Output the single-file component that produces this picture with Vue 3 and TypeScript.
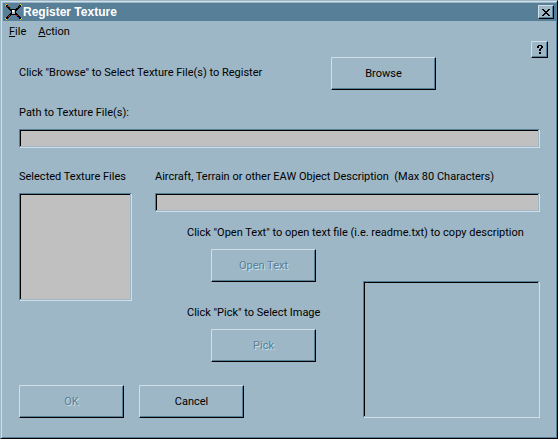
<script setup lang="ts">
import { ref } from 'vue'

interface MenuEntry {
  key: string
  rest: string
}

const menus: MenuEntry[] = [
  { key: 'F', rest: 'ile' },
  { key: 'A', rest: 'ction' },
]

const path = ref('')
const description = ref('')
const files = ref<string[]>([])
</script>

<template>
  <main class="window">
    <header class="titlebar">
      <svg class="app-icon" viewBox="0 0 17 16" shape-rendering="crispEdges" aria-hidden="true">
        <path fill="none" stroke="#000" stroke-width="2" d="M1 1L7 7M16 1L10 7M7 9L1 15M10 9L16 15" />
        <path fill="#000" d="M6 5h5v6h-5z" />
        <path fill="#e8d820" d="M0 1h1v1h-1zM1 0h1v1h-1zM15 0h1v1h-1zM16 1h1v1h-1zM0 14h1v1h-1zM1 15h1v1h-1zM15 15h1v1h-1zM16 14h1v1h-1z" />
        <path fill="#c01818" d="M3 2h1v1h-1zM12 3h1v1h-1zM11 11h2v1h-2zM3 12h1v1h-1z" />
        <path fill="#2040b0" d="M2 2h1v1h-1zM14 2h1v1h-1zM13 13h1v1h-1z" />
        <path fill="#208040" d="M5 4h1v1h-1zM4 11h1v1h-1z" />
        <path fill="#b8b8b8" d="M7 6h3v4h-3z" />
        <path fill="#fff" d="M7 6h2v2h-2z" />
      </svg>
      <h1 class="title">Register Texture</h1>
      <button class="button close" type="button" aria-label="Close">
        <svg viewBox="0 0 8 7" shape-rendering="crispEdges" aria-hidden="true">
          <path d="M0 0h2v1h1v1h2v-1h1v-1h2v1h-1v1h-1v1h-1v1h1v1h1v1h1v1h-2v-1h-1v-1h-2v1h-1v1h-2v-1h1v-1h1v-1h1v-1h-1v-1h-1v-1h-1z" />
        </svg>
      </button>
    </header>

    <nav class="menubar">
      <button v-for="menu in menus" :key="menu.key" class="menu" type="button"><u>{{ menu.key }}</u>{{ menu.rest }}</button>
    </nav>

    <form class="body" @submit.prevent>
      <div class="help-row">
        <button class="button help" type="button" aria-label="Help">
          <svg viewBox="0 0 6 9" shape-rendering="crispEdges" aria-hidden="true">
            <path d="M1 0h4v1h1v2h-1v1h-1v2h-2v-2h1v-1h1v-2h-2v2h-2v-2h1zM2 7h2v2h-2z" />
          </svg>
        </button>
      </div>

      <div class="browse-row">
        <p class="text">Click "Browse" to Select Texture File(s) to Register</p>
        <button class="button command" type="button">Browse</button>
      </div>

      <div class="field path-field">
        <label class="text" for="path">Path to Texture File(s):</label>
        <input id="path" v-model="path" class="sunken entry" type="text" readonly />
      </div>

      <div class="details">
        <div class="field list-field">
          <label class="text" for="files">Selected Texture Files</label>
          <select id="files" class="sunken list" size="6">
            <option v-for="file in files" :key="file">{{ file }}</option>
          </select>
        </div>

        <div class="description">
          <div class="field">
            <label class="text" for="description">Aircraft, Terrain or other EAW Object Description&nbsp; (Max 80 Characters)</label>
            <input id="description" v-model="description" class="sunken entry" type="text" maxlength="80" />
          </div>
          <p class="text hint">Click "Open Text" to open text file (i.e. readme.txt) to copy description</p>
        </div>

        <button class="button command open" type="button" disabled>Open Text</button>

        <div class="pick">
          <p class="text hint">Click "Pick" to Select Image</p>
          <button class="button command" type="button" disabled>Pick</button>
        </div>

        <div class="actions">
          <button class="button command" type="submit" disabled>OK</button>
          <button class="button command" type="button">Cancel</button>
        </div>

        <div class="sunken preview" role="img" aria-label="Image preview"></div>
      </div>
    </form>
  </main>
</template>

<style>
body {
  background: #9db7c6;
}
</style>

<style scoped>
.window {
  --face: #9db7c6;
  --light: #cfdfe8;
  --dark: #577f98;
  display: flex;
  flex-direction: column;
  box-sizing: border-box;
  min-height: 100vh;
  padding: 1px;
  border: 1px solid;
  border-color: var(--face) #000 #000 var(--face);
  box-shadow: inset 1px 1px var(--light), inset -1px -1px var(--dark);
  background: var(--face);
  color: #000;
  font: 11px/16px Roboto, "Liberation Sans", Arial, sans-serif;
}

.titlebar {
  display: flex;
  align-items: center;
  height: 18px;
  margin: 1px 0 0 1px;
  padding: 0 2px;
  background: var(--dark);
  color: #fff;
}

.app-icon {
  width: 17px;
  height: 16px;
}

.title {
  flex: 1;
  margin: 0 0 0 1px;
  font-family: "Liberation Sans", Arial, sans-serif;
  font-size: 12px;
  line-height: 16px;
}

.button {
  display: flex;
  align-items: center;
  justify-content: center;
  box-sizing: border-box;
  padding: 0;
  border: 1px solid;
  border-color: var(--light) #000 #000 var(--light);
  border-radius: 0;
  box-shadow: inset -1px -1px var(--dark);
  background: var(--face);
  color: #000;
  font: inherit;
}

.button:disabled {
  color: var(--dark);
  text-shadow: 1px 1px var(--light);
}

.command {
  width: 105px;
  height: 33px;
}

.close {
  width: 16px;
  height: 14px;
}

.close svg {
  width: 8px;
  height: 7px;
}

.help {
  width: 17px;
  height: 17px;
}

.help svg {
  width: 6px;
  height: 9px;
}

.menubar {
  display: flex;
  gap: 12px;
  height: 18px;
  padding: 2px 7px 0;
}

.menu {
  padding: 0;
  border: 0;
  background: none;
  color: inherit;
  font: inherit;
}

.body {
  display: flex;
  flex: 1;
  flex-direction: column;
  padding: 0 16px 19px 17px;
}

.help-row {
  display: flex;
  justify-content: flex-end;
  height: 16px;
  margin-right: -8px;
}

.text {
  margin: 0;
  line-height: 18px;
  white-space: pre;
}

.browse-row {
  display: flex;
  align-items: flex-start;
}

.browse-row .text {
  width: 312px;
  padding-top: 7px;
}

.field {
  display: flex;
  flex-direction: column;
  gap: 7px;
}

.path-field {
  margin-top: 14px;
}

.sunken {
  box-sizing: border-box;
  width: 100%;
  margin: 0;
  padding: 1px;
  border: 1px solid;
  border-color: var(--dark) var(--light) var(--light) var(--dark);
  border-radius: 0;
  outline: none;
  box-shadow: inset -1px -1px var(--face), inset 1px 1px #000;
  background: #c0c0c0;
  color: #000;
  font: inherit;
}

.entry {
  height: 19px;
}

.list {
  height: 108px;
  overflow: hidden;
}

.details {
  display: grid;
  flex: 1;
  grid-template-columns: 136px 208px 1fr;
  grid-template-rows: auto auto auto 1fr;
  margin-top: 20px;
}

.list-field {
  grid-area: 1 / 1 / 4 / 2;
  width: 113px;
}

.description {
  grid-area: 1 / 2 / 2 / 4;
}

.hint {
  margin: 12px 0 7px 32px;
}

.open {
  grid-area: 2 / 2;
  margin-left: 56px;
}

.pick {
  grid-area: 3 / 2;
  margin-top: 10px;
}

.pick .command {
  margin-left: 56px;
}

.actions {
  display: flex;
  grid-area: 4 / 1 / 5 / 3;
  align-items: flex-end;
  gap: 15px;
  padding-top: 23px;
}

.preview {
  grid-area: 2 / 3 / 5 / 4;
  width: auto;
  margin-top: 32px;
  background: var(--face);
}
</style>
